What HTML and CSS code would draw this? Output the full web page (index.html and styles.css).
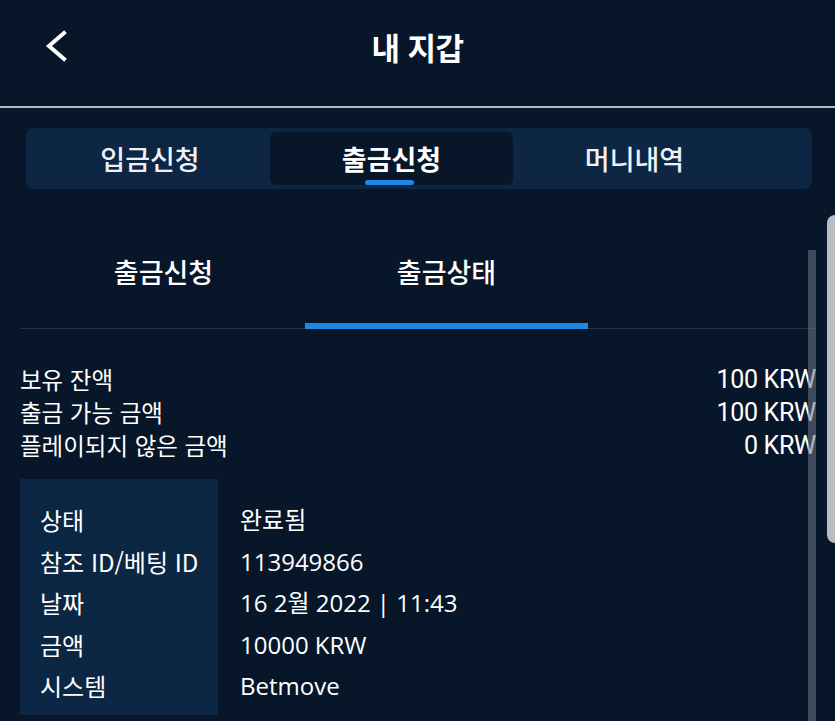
FILE: index.html
```html
<!DOCTYPE html>
<html lang="ko">
<head>
  <meta charset="UTF-8">
  <meta name="viewport" content="width=device-width, initial-scale=1.0">
  <title>내 지갑</title>
  <link rel="stylesheet" href="styles.css">
</head>
<body>
  <header class="topbar">
    <button class="back" type="button" aria-label="뒤로">
      <svg width="24" height="36" viewBox="0 0 24 36">
        <path d="M19 4 L4 17 L19 30" fill="none" stroke="#fff" stroke-width="4" stroke-linecap="square"/>
      </svg>
    </button>
    <h1>내 지갑</h1>
    <span></span>
  </header>

  <nav class="wallet-tabs">
    <button type="button" class="wallet-tab">입금신청</button>
    <button type="button" class="wallet-tab active">출금신청</button>
    <button type="button" class="wallet-tab">머니내역</button>
  </nav>

  <section class="withdraw">
    <div class="sub-tabs">
      <button type="button" class="sub-tab">출금신청</button>
      <button type="button" class="sub-tab active">출금상태</button>
    </div>

    <div class="balance">
      <div class="balance-row"><span>보유 잔액</span><span class="amount">100 KRW</span></div>
      <div class="balance-row"><span>출금 가능 금액</span><span class="amount">100 KRW</span></div>
      <div class="balance-row"><span>플레이되지 않은 금액</span><span class="amount">0 KRW</span></div>
    </div>

    <div class="status-card">
      <div class="status-labels">
        <div>상태</div>
        <div>참조 ID/베팅 ID</div>
        <div>날짜</div>
        <div>금액</div>
        <div>시스템</div>
      </div>
      <div class="status-values">
        <div>완료됨</div>
        <div>113949866</div>
        <div>16 2월 2022 | 11:43</div>
        <div>10000 KRW</div>
        <div>Betmove</div>
      </div>
    </div>

    <div class="scrollbar"></div>
  </section>

  <div class="side-panel"></div>
</body>
</html>
```

FILE: styles.css
```css
body {
  margin: 0;
  padding: 0;
  background-color: #071628;
  color: #fff;
  font-family: "Noto Sans CJK KR", "Open Sans", sans-serif;
  width: 835px;
  height: 721px;
  overflow: hidden;
  position: relative;
}
button {
  font-family: inherit;
  color: inherit;
  background: none;
  border: none;
  padding: 0;
  cursor: pointer;
}
.topbar {
  height: 108px;
  box-sizing: border-box;
  display: grid;
  grid-template-columns: 1fr auto 1fr;
  align-items: center;
  padding: 0 40px 14px;
  border-bottom: 2px solid #aeb8c2;
}
.back {
  justify-self: start;
  width: 30px;
  height: 40px;
  display: flex;
  align-items: center;
  justify-content: center;
  margin-left: 2px;
  margin-top: 2px;
}
.topbar h1 {
  margin: 0;
  font-size: 31px;
  font-weight: 700;
  letter-spacing: -0.5px;
}
.wallet-tabs {
  margin: 20px 0 0 26px;
  width: 786px;
  height: 61px;
  box-sizing: border-box;
  padding: 4px;
  display: flex;
  background-color: #0c2643;
  border-radius: 8px;
}
.wallet-tab {
  width: 243px;
  height: 53px;
  font-size: 27px;
  font-weight: 500;
  position: relative;
  border-radius: 6px;
  color: #eef2f6;
}
.wallet-tab:first-child {
  width: 240px;
}
.wallet-tab.active {
  background-color: #071628;
  font-weight: 700;
  color: #fff;
}
.wallet-tab.active::after {
  content: "";
  position: absolute;
  left: 50%;
  bottom: 0;
  width: 49px;
  height: 5px;
  margin-left: -27px;
  border-radius: 3px;
  background-color: #1e88e5;
}
.withdraw {
  margin: 31px 19px 0 20px;
  position: relative;
}
.sub-tabs {
  display: flex;
  padding-left: 2px;
  border-bottom: 1px solid #253447;
}
.sub-tab {
  width: 283px;
  padding: 34px 0 33px;
  line-height: 36px;
  font-size: 27px;
  font-weight: 500;
  border-bottom: 6px solid transparent;
  margin-bottom: -1px;
}
.sub-tab.active {
  border-bottom-color: #1e88e5;
}
.balance {
  margin-top: 34px;
  font-size: 23.5px;
}
.balance-row {
  display: flex;
  justify-content: space-between;
  height: 33px;
  line-height: 33px;
}
.amount {
  font-family: Roboto, "Liberation Sans", sans-serif;
  font-size: 25px;
  letter-spacing: -0.3px;
}
.status-card {
  margin-top: 17px;
  display: flex;
  font-size: 24px;
  line-height: 41.5px;
}
.status-labels {
  width: 198px;
  box-sizing: border-box;
  padding: 20px 0 8px 20px;
  white-space: nowrap;
  background-color: #0b2744;
}
.status-values {
  padding: 20px 22px 8px;
  white-space: nowrap;
  font-family: "Open Sans", "Noto Sans CJK KR", sans-serif;
  font-size: 24px;
}
.scrollbar {
  position: absolute;
  right: 0;
  top: 30px;
  width: 8px;
  height: 480px;
  background-color: rgba(110, 120, 135, 0.55);
}
.side-panel {
  position: absolute;
  top: 215px;
  right: 0;
  width: 8px;
  height: 328px;
  background-color: #b9bdc3;
  border-radius: 10px 0 0 10px;
}
```
